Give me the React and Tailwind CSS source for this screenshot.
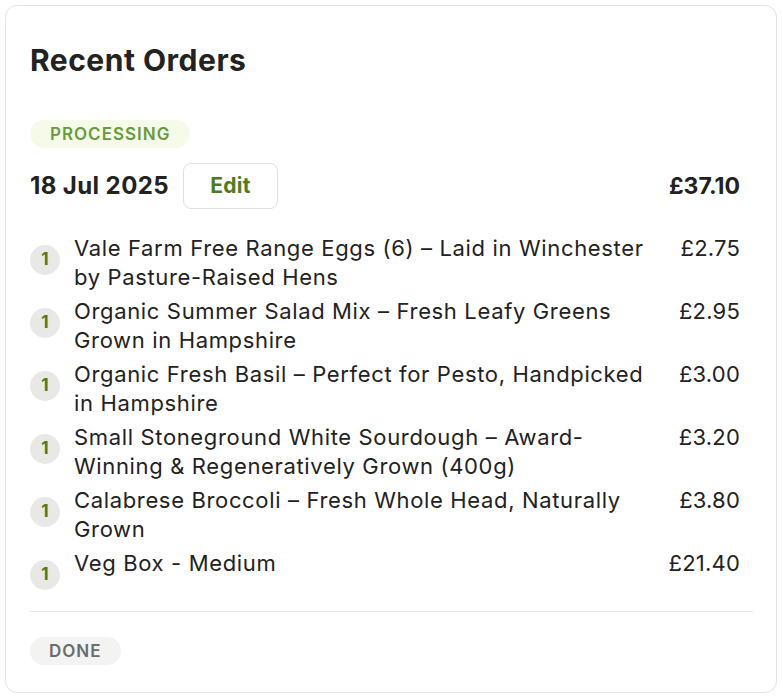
import React from "react";

const items = [
  { name: "Vale Farm Free Range Eggs (6) – Laid in Winchester by Pasture-Raised Hens", price: "£2.75" },
  { name: "Organic Summer Salad Mix – Fresh Leafy Greens Grown in Hampshire", price: "£2.95" },
  { name: "Organic Fresh Basil – Perfect for Pesto, Handpicked in Hampshire", price: "£3.00" },
  { name: "Small Stoneground White Sourdough – Award-Winning & Regeneratively Grown (400g)", price: "£3.20" },
  { name: "Calabrese Broccoli – Fresh Whole Head, Naturally Grown", price: "£3.80" },
  { name: "Veg Box - Medium", price: "£21.40" },
];

export default function App() {
  return (
    <div className="bg-white p-[5px] min-h-[698px]" style={{ fontFamily: "Inter, 'Noto Sans', sans-serif" }}>
      <div className="rounded-[12px] border border-[#e3e3e3] bg-white pl-[24px] pr-[23px] pt-[36px] pb-[27px]">
        <h2 className="text-[30px] leading-[36px] font-bold text-[#222222] tracking-[0.5px]">Recent Orders</h2>

        <div className="mt-[42px]">
          <span className="inline-block rounded-full bg-[#f6fbe9] px-[20px] h-[28px] leading-[28px] text-[17px] font-semibold text-[#6a9a40] tracking-[1px]">
            PROCESSING
          </span>
        </div>

        <div className="mt-[15px] flex items-center justify-between pr-[13px]">
          <div className="flex items-center gap-[14px]">
            <span className="text-[24px] font-bold text-[#222222] tracking-[0.4px]">18 Jul 2025</span>
            <button className="h-[46px] w-[95px] rounded-[8px] border border-[#e0e0e0] bg-white text-[21px] font-bold text-[#4d7c1f] tracking-[0.3px]">
              Edit
            </button>
          </div>
          <span className="text-[23px] font-bold text-[#222222]">£37.10</span>
        </div>

        <ul className="mt-[25px] flex flex-col gap-[6px] pr-[13px]">
          {items.map((it, i) => (
            <li key={i} className="flex items-start">
              <span className="mt-[11px] flex h-[30px] w-[30px] shrink-0 items-center justify-center rounded-full bg-[#e8e8e6] text-[17px] font-bold text-[#4d7c1f]">
                1
              </span>
              <span className="ml-[14px] flex-1 text-[22px] leading-[28.5px] text-[#222222] tracking-[0.65px]">{it.name}</span>
              <span className="ml-[20px] shrink-0 text-[22px] leading-[28.5px] text-[#222222] tracking-[0.2px]">{it.price}</span>
            </li>
          ))}
        </ul>

        <div className="mt-[21px] border-t border-[#e5e5e5]" />

        <div className="mt-[25px]">
          <span className="inline-block rounded-full bg-[#f3f3f2] px-[19px] h-[28px] leading-[28px] text-[17px] font-semibold text-[#6b6b6b] tracking-[1px]">
            DONE
          </span>
        </div>
      </div>
    </div>
  );
}
